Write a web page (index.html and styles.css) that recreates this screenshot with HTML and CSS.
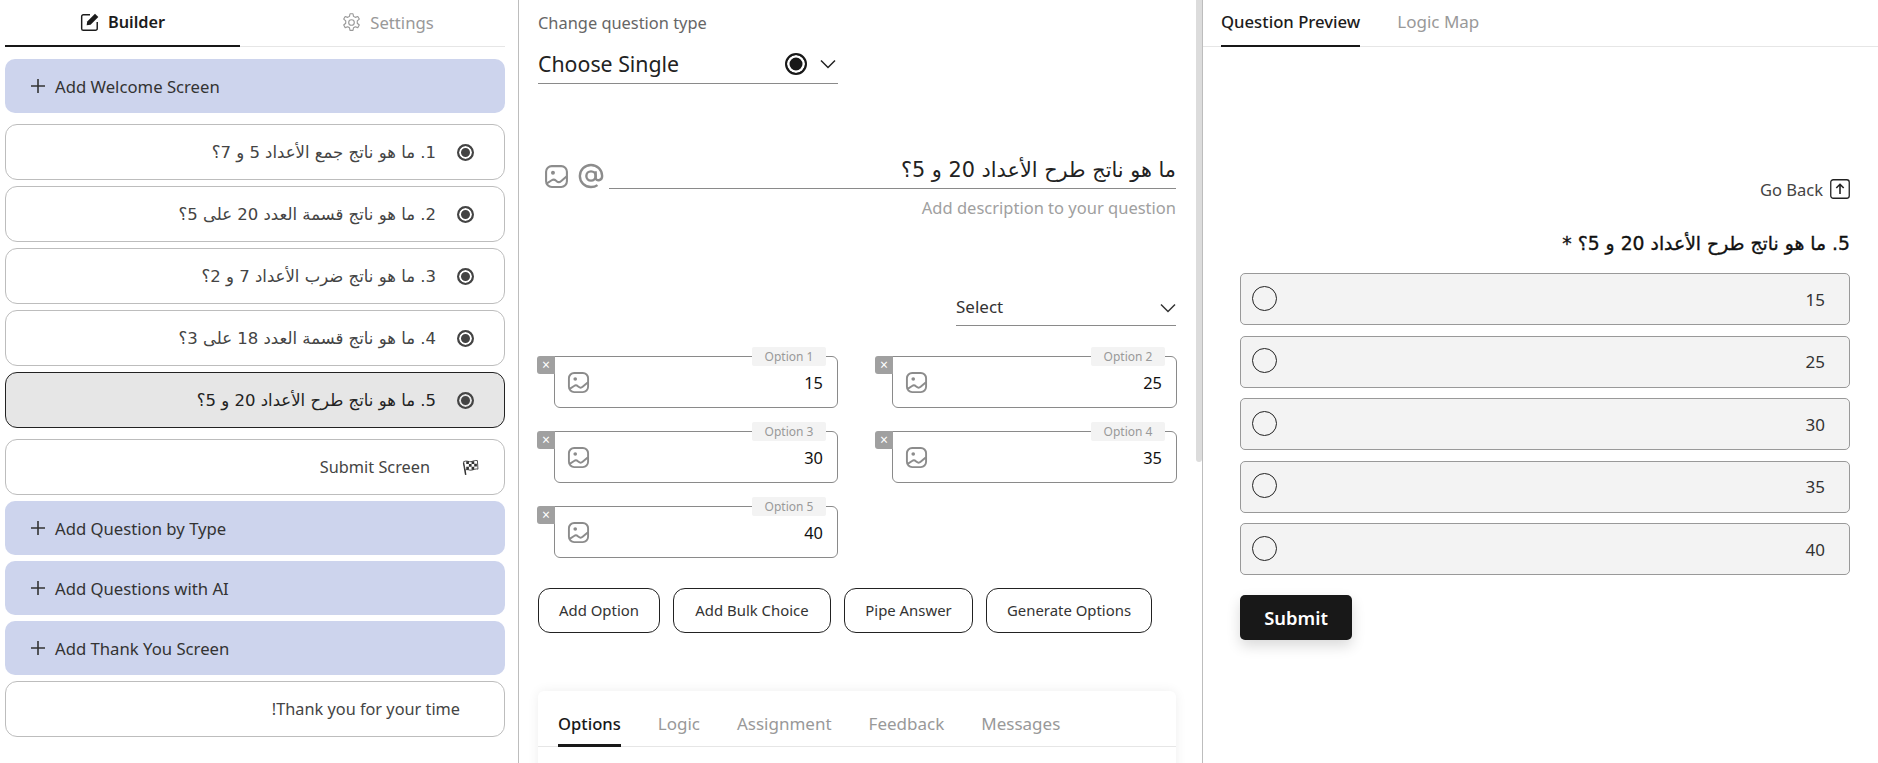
FILE: index.html
```html
<!DOCTYPE html>
<html lang="en">
<head>
<meta charset="utf-8">
<title>Builder</title>
<link rel="stylesheet" href="styles.css">
</head>
<body>
<svg class="defs" width="0" height="0" aria-hidden="true">
  <symbol id="img" viewBox="0 0 24 24"><rect x="2" y="2" width="20" height="20" rx="5.5" fill="none" stroke="currentColor" stroke-width="2"/><circle cx="8.6" cy="8.4" r="1.9" fill="currentColor"/><path d="M2.8 18.6 7.4 15.6c1.300-.85 2.900-.7 4 .3l.7.6c1.200 1 3 1 4.200 0l5-4.300" fill="none" stroke="currentColor" stroke-width="2" stroke-linecap="round"/></symbol>
  <symbol id="plus" viewBox="0 0 16 16"><path d="M8 1v14M1 8h14" fill="none" stroke="currentColor" stroke-width="1.600"/></symbol>
  <symbol id="chev" viewBox="0 0 16 10"><path d="M1 1.500 8 8.500 15 1.500" fill="none" stroke="currentColor" stroke-width="1.500"/></symbol>
</svg>
<div class="app">
  <aside class="left">
    <nav class="tabs-main">
      <div class="tab-main on"><svg class="ico-16" viewBox="0 0 18 18"><path d="M9 2.500H3A1.500 1.500 0 0 0 1.500 4v11A1.500 1.500 0 0 0 3 16.500h11a1.500 1.500 0 0 0 1.500-1.500V9" fill="none" stroke="currentColor" stroke-width="1.300"/><path d="M6.500 8.500 13.500 1.500l3 3-7 7-3.500.5z" fill="currentColor"/></svg><span>Builder</span></div>
      <div class="tab-main"><svg class="ico-18" viewBox="0 0 24 24" fill="none" stroke="currentColor" stroke-width="1.300"><path d="M10.300 2h3.400l.6 3 2 1.100 2.900-1 1.700 3-2.300 2v2.800l2.300 2-1.700 3-2.900-1-2 1.100-.6 3h-3.400l-.6-3-2-1.100-2.900 1-1.700-3 2.300-2v-2.800l-2.300-2 1.700-3 2.900 1 2-1.100z" stroke-linejoin="round"/><circle cx="12" cy="12" r="3.200"/></svg><span>Settings</span></div>
    </nav>
    <div class="add add-first"><svg class="plus"><use href="#plus"/></svg>Add Welcome Screen</div>
    <div class="list">
      <div class="item q"><span class="radio"></span><span class="q-text">1. ما هو ناتج جمع الأعداد 5 و 7؟</span></div>
      <div class="item q"><span class="radio"></span><span class="q-text">2. ما هو ناتج قسمة العدد 20 على 5؟</span></div>
      <div class="item q"><span class="radio"></span><span class="q-text">3. ما هو ناتج ضرب الأعداد 7 و 2؟</span></div>
      <div class="item q"><span class="radio"></span><span class="q-text">4. ما هو ناتج قسمة العدد 18 على 3؟</span></div>
      <div class="item q sel"><span class="radio"></span><span class="q-text">5. ما هو ناتج طرح الأعداد 20 و 5؟</span></div>
    </div>
    <div class="item submit-item">
      <svg class="flag" viewBox="0 0 16 16"><path d="M3.500 15 1.500 3.500" stroke="#333" stroke-width="1.400" fill="none"/><path d="M1.500 2.500c3-1.500 5 .5 7 0s4-1.500 6-1l.5 8c-2-.5-4 .5-6 1s-4-1.500-6 0z" fill="#fff" stroke="#333" stroke-width=".8"/><path d="M4 2.200h2.500v2.600H4zM9 2h2.500v2.600H9zM6.500 4.800H9v2.600H6.500zM11.500 4.500H14v2.600h-2.500zM4 7.400h2.500V10H4zM9 7.400h2.500V10H9z" fill="#333"/></svg>
      <span class="submit-text">Submit Screen</span>
    </div>
    <div class="add"><svg class="plus"><use href="#plus"/></svg>Add Question by Type</div>
    <div class="add"><svg class="plus"><use href="#plus"/></svg>Add Questions with AI</div>
    <div class="add"><svg class="plus"><use href="#plus"/></svg>Add Thank You Screen</div>
    <div class="item thanks"><span class="thanks-text">Thank you for your time!</span></div>
  </aside>

  <main class="mid">
    <div class="scroll-thumb"></div>
    <div class="type-label">Change question type</div>
    <div class="type-select">
      <span class="type-name">Choose Single</span>
      <span class="type-radio"></span>
      <svg class="type-chev"><use href="#chev"/></svg>
    </div>
    <div class="title-row">
      <svg class="ico-img-lg"><use href="#img"/></svg>
      <svg class="ico-at" viewBox="0 0 24 24" fill="none" stroke="currentColor" stroke-width="2.200"><circle cx="12" cy="12" r="4.300"/><path d="M16.300 7.700v5.800c0 3.700 6 3.300 6-1.500C22.300 6.300 17.700 1.800 12 1.800S1.700 6.300 1.700 12 6.300 22.200 12 22.200c2.300 0 4.300-.6 6-1.800"/></svg>
      <div class="title-input">ما هو ناتج طرح الأعداد 20 و 5؟</div>
    </div>
    <div class="desc">Add description to your question</div>
    <div class="small-select"><span>Select</span><svg class="small-chev"><use href="#chev"/></svg></div>
    <div class="opts">
      <div class="opt"><span class="opt-x">×</span><span class="opt-label">Option 1</span><svg class="ico-img"><use href="#img"/></svg><span class="opt-val">15</span></div>
      <div class="opt"><span class="opt-x">×</span><span class="opt-label">Option 2</span><svg class="ico-img"><use href="#img"/></svg><span class="opt-val">25</span></div>
      <div class="opt"><span class="opt-x">×</span><span class="opt-label">Option 3</span><svg class="ico-img"><use href="#img"/></svg><span class="opt-val">30</span></div>
      <div class="opt"><span class="opt-x">×</span><span class="opt-label">Option 4</span><svg class="ico-img"><use href="#img"/></svg><span class="opt-val">35</span></div>
      <div class="opt"><span class="opt-x">×</span><span class="opt-label">Option 5</span><svg class="ico-img"><use href="#img"/></svg><span class="opt-val">40</span></div>
    </div>
    <div class="btns">
      <button class="btn b1">Add Option</button>
      <button class="btn b2">Add Bulk Choice</button>
      <button class="btn b3">Pipe Answer</button>
      <button class="btn b4">Generate Options</button>
    </div>
    <section class="card">
      <div class="card-tabs">
        <span class="card-tab on">Options</span>
        <span class="card-tab">Logic</span>
        <span class="card-tab">Assignment</span>
        <span class="card-tab">Feedback</span>
        <span class="card-tab">Messages</span>
      </div>
    </section>
  </main>

  <section class="right">
    <nav class="r-tabs">
      <span class="r-tab on">Question Preview</span>
      <span class="r-tab">Logic Map</span>
    </nav>
    <div class="go-back"><span>Go Back</span><svg class="ico-back" viewBox="0 0 20 20" fill="none" stroke="currentColor"><rect x=".75" y=".75" width="18.500" height="18.500" rx="2.500" stroke-width="1.300"/><path d="M10 15V5.500M6.300 9 10 5.300 13.700 9" stroke-width="1.600"/></svg></div>
    <h2 class="p-title">5. ما هو ناتج طرح الأعداد 20 و 5؟ *</h2>
    <div class="p-opts">
      <div class="p-opt"><span class="p-circle"></span><span class="p-val">15</span></div>
      <div class="p-opt"><span class="p-circle"></span><span class="p-val">25</span></div>
      <div class="p-opt"><span class="p-circle"></span><span class="p-val">30</span></div>
      <div class="p-opt"><span class="p-circle"></span><span class="p-val">35</span></div>
      <div class="p-opt"><span class="p-circle"></span><span class="p-val">40</span></div>
    </div>
    <button class="p-submit">Submit</button>
  </section>
</div>
</body>
</html>
```
FILE: styles.css
```css
* { box-sizing: border-box; }
html, body { margin: 0; height: 100%; overflow: hidden; background: #fff; }
body { font-family: "Noto Sans", "DejaVu Sans", sans-serif; font-size: 16px; color: #222; }
.defs { position: absolute; }
.app { display: flex; height: 763px; }

/* left column */
.left { width: 519px; flex: none; padding: 0 13px 0 5px; border-right: 1px solid #bdbdbd; display: flex; flex-direction: column; }
.left > * { flex-shrink: 0; }
.tabs-main { display: flex; gap: 30px; height: 47px; border-bottom: 1px solid #e6e6e6; margin-bottom: 12px; }
.tab-main { width: 235px; height: 47px; display: flex; align-items: center; justify-content: center; gap: 8px; font-size: 16.700px; color: #999; padding-bottom: 3px; }
.tab-main.on { color: #1c1c1c; font-weight: 600; font-size: 16.300px; padding-bottom: 1px; border-bottom: 2px solid #181818; }
.ico-16 { width: 20px; height: 20px; }
.ico-18 { width: 21px; height: 21px; }
.add { height: 54px; background: #cdd4ed; border-radius: 10px; display: flex; align-items: center; padding-left: 25px; color: #333; margin-bottom: 6px; font-size: 16.700px; }
.add-first { margin-bottom: 11px; }
.plus { width: 16px; height: 16px; margin-right: 9px; color: #333; flex: none; }
.list { display: flex; flex-direction: column; }
.item { height: 56px; border: 1px solid #bdbdbd; border-radius: 12px; background: #fff; display: flex; align-items: center; color: #444; margin-bottom: 6px; flex-shrink: 0; }
.q { flex-direction: row-reverse; justify-content: flex-start; padding-right: 30px; }
.q.sel { background: #e6e6e6; border-color: #222; color: #222; margin-bottom: 11px; }
.radio { width: 17px; height: 17px; border: 2px solid #444; border-radius: 50%; background: #444; box-shadow: inset 0 0 0 2px #fff; flex: none; margin-left: 21px; }
.sel .radio { box-shadow: inset 0 0 0 2px #e6e6e6; }
.q-text { direction: rtl; font-family: "DejaVu Sans", sans-serif; font-size: 16.500px; padding-top: 1px; }
.submit-item { flex-direction: row-reverse; padding-right: 25px; }
.flag { width: 17px; height: 17px; flex: none; margin-left: 32px; }
.submit-text { font-size: 16.300px; }
.thanks { justify-content: flex-end; padding-right: 44px; }
.thanks-text { direction: rtl; font-size: 16.300px; }

/* middle column */
.mid { position: relative; width: 684px; flex: none; padding: 13px 26px 0 19px; border-right: 1px solid #bdbdbd; display: flex; flex-direction: column; overflow: hidden; }
.mid > * { flex-shrink: 0; }
.scroll-thumb { position: absolute; top: 0; right: 0; width: 6px; height: 462px; background: #dcdcdc; border-radius: 0 0 3px 3px; }
.type-label { height: 20px; line-height: 20px; font-size: 16.400px; color: #666; }
.type-select { width: 300px; height: 40px; margin-top: 11px; border-bottom: 1px solid #8a8a8a; display: flex; align-items: center; }
.type-name { font-size: 21.300px; color: #222; flex: 1; }
.type-radio { width: 22px; height: 22px; border: 2px solid #181818; border-radius: 50%; background: #181818; box-shadow: inset 0 0 0 2.500px #fff; }
.type-chev { width: 16px; height: 10px; margin: 0 2px 0 13px; color: #222; }
.title-row { display: flex; align-items: flex-end; height: 29px; margin-top: 76px; padding-left: 6px; color: #8c8c8c; }
.ico-img-lg { width: 25px; height: 25px; flex: none; }
.ico-at { width: 26px; height: 26px; margin-left: 9px; flex: none; }
.title-input { flex: 1; height: 29px; margin-left: 5px; border-bottom: 1px solid #8a8a8a; direction: rtl; font-family: "DejaVu Sans", sans-serif; font-size: 20.800px; line-height: 21px; color: #222; }
.desc { height: 20px; line-height: 20px; margin-top: 9px; font-size: 16.500px; color: #a0a0a0; text-align: right; }
.small-select { align-self: flex-end; width: 220px; height: 36px; margin: 72px 0 0; padding-bottom: 2px; border-bottom: 1px solid #8a8a8a; display: flex; align-items: center; justify-content: space-between; font-size: 17px; color: #333; }
.small-chev { width: 16px; height: 10px; color: #333; margin-top: 3px; }
.opts { display: grid; grid-template-columns: 301px 302px; column-gap: 37px; row-gap: 23px; margin: 30px 0 0 -1px; }
.opt { position: relative; height: 52px; margin-left: 17px; border: 1px solid #8a8a8a; border-radius: 0 6px 6px 6px; display: flex; align-items: center; justify-content: space-between; padding: 0 14px 0 12px; }
.opt-x { position: absolute; left: -18px; top: -1px; width: 18px; height: 18px; background: #a0a0a0; border-radius: 3px 0 0 3px; color: #fff; font-size: 14px; line-height: 17px; text-align: center; }
.opt-label { position: absolute; right: 11px; top: -10px; width: 74px; height: 19px; background: #f3f3f3; border-radius: 2px; color: #999; font-size: 12px; line-height: 19px; text-align: center; }
.ico-img { width: 23px; height: 23px; color: #8c8c8c; }
.opt-val { font-size: 16.400px; color: #111; }
.btns { display: flex; gap: 13px; margin-top: 30px; }
.btn { height: 45px; padding: 0 0 2px; background: #fff; border: 1px solid #222; border-radius: 12px; font: 14.900px "Noto Sans", sans-serif; color: #333; }
.b1 { width: 122px; }
.b2 { width: 158px; }
.b3 { width: 129px; }
.b4 { width: 166px; }
.card { margin-top: 58px; height: 120px; border-radius: 6px; background: #fff; box-shadow: 0 0 12px rgba(0,0,0,.07); }
.card-tabs { display: flex; height: 56px; padding-left: 20px; gap: 37px; border-bottom: 1px solid #e6e6e6; }
.card-tab { height: 56px; line-height: 66px; font-size: 17px; color: #999; }
.card-tab.on { color: #181818; font-weight: 500; font-size: 16.600px; border-bottom: 3px solid #181818; }

/* right column */
.right { flex: 1; min-width: 0; display: flex; flex-direction: column; padding-right: 28px; }
.right > * { flex-shrink: 0; }
.r-tabs { display: flex; gap: 37px; height: 47px; padding-left: 18px; margin-right: -28px; border-bottom: 1px solid #e6e6e6; }
.r-tab { height: 47px; line-height: 44px; font-size: 17px; color: #999; }
.r-tab.on { color: #1c1c1c; font-weight: 500; font-size: 16.700px; border-bottom: 2px solid #181818; }
.go-back { display: flex; align-items: center; justify-content: flex-end; gap: 7px; height: 20px; margin-top: 132px; font-size: 16.500px; color: #444; }
.ico-back { width: 20px; height: 20px; color: #222; }
.p-title { margin: 32px 0 0; height: 26px; line-height: 26px; font-family: "DejaVu Sans", sans-serif; font-size: 18.800px; font-weight: 400; -webkit-text-stroke: .35px #111; color: #111; direction: rtl; }
.p-opts { display: flex; flex-direction: column; gap: 10.500px; margin: 16px 0 0 37px; }
.p-opt { height: 52px; background: #f3f3f3; border: 1px solid #999; border-radius: 5px; display: flex; align-items: center; justify-content: space-between; padding: 0 24px 0 11px; }
.p-circle { width: 25px; height: 25px; border: 1px solid #222; border-radius: 50%; margin-top: -2px; }
.p-val { font-size: 17px; color: #333; }
.p-submit { align-self: flex-start; margin: 20px 0 0 37px; width: 112px; height: 45px; padding-bottom: 2px; background: #181818; color: #fff; border: 0; border-radius: 5px; font: 600 18.400px "Noto Sans", sans-serif; box-shadow: 0 6px 14px rgba(0,0,0,.15); }
```
